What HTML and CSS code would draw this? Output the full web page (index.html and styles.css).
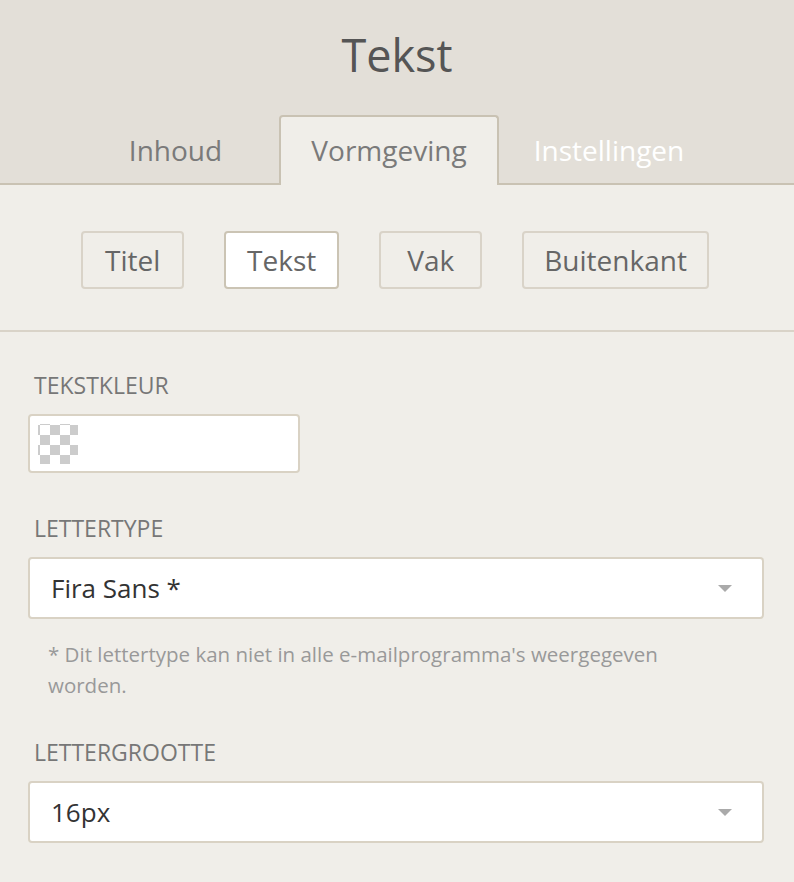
FILE: index.html
```html
<!DOCTYPE html>
<html lang="nl">
<head>
<meta charset="utf-8">
<title>Tekst</title>
<link rel="stylesheet" href="styles.css">
</head>
<body>
<div class="panel">
  <header class="header">
    <h1 class="title">Tekst</h1>
    <nav class="tabs">
      <div class="tab tab-first">Inhoud</div>
      <div class="tab tab-active">Vormgeving</div>
      <div class="tab tab-light">Instellingen</div>
    </nav>
  </header>
  <div class="subnav">
    <button class="pill">Titel</button>
    <button class="pill pill-active">Tekst</button>
    <button class="pill">Vak</button>
    <button class="pill">Buitenkant</button>
  </div>
  <div class="content">
    <div class="field">
      <div class="label">Tekstkleur</div>
      <div class="color-input"><span class="swatch"></span></div>
    </div>
    <div class="field field-note">
      <div class="label">Lettertype</div>
      <div class="select"><span class="select-value">Fira Sans *</span><span class="caret"></span></div>
      <p class="note">* Dit lettertype kan niet in alle e-mailprogramma's weergegeven worden.</p>
    </div>
    <div class="field">
      <div class="label">Lettergrootte</div>
      <div class="select"><span class="select-value">16px</span><span class="caret"></span></div>
    </div>
  </div>
</div>
</body>
</html>
```

FILE: styles.css
```css
* { box-sizing: border-box; }
html, body { margin: 0; padding: 0; }
body {
  background: #f0eee9;
  font-family: "Open Sans", "Liberation Sans", sans-serif;
  width: 794px;
  height: 882px;
  overflow: hidden;
}
.header {
  background: #e3dfd8;
  height: 185px;
  display: flex;
  flex-direction: column;
}
.title {
  margin: 0;
  height: 115px;
  padding-top: 24px;
  text-align: center;
  font-size: 45px;
  font-weight: 400;
  line-height: 62px;
  color: #555555;
}
.tabs {
  display: flex;
  justify-content: center;
  padding-right: 16px;
  height: 70px;
  border-bottom: 2px solid #c9c2b3;
}
.tab {
  width: 220px;
  height: 68px;
  text-align: center;
  font-size: 28px;
  line-height: 70px;
  color: #7a7a7a;
}
.tab-first { padding-left: 13px; }
.tab-active {
  background: #f0eee9;
  border: 2px solid #c9c2b3;
  border-bottom: none;
  border-radius: 4px 4px 0 0;
  height: 70px;
  margin-bottom: -2px;
  line-height: 66px;
}
.tab-light { color: #ffffff; }
.subnav {
  display: flex;
  justify-content: center;
  gap: 40px;
  padding: 46px 4px 41px 0;
  border-bottom: 2px solid #d9d3c8;
}
.pill {
  height: 58px;
  min-width: 103px;
  padding: 0 20px;
  background: transparent;
  border: 2px solid #d9d3c8;
  border-radius: 4px;
  font-family: inherit;
  font-size: 28px;
  color: #666666;
  line-height: 54px;
}
.pill-active {
  background: #ffffff;
  border-color: #cbc4b4;
  padding: 0 21px;
}
.content {
  padding: 37px 30px 0 28px;
}
.field { margin-bottom: 39px; }
.field-note { margin-bottom: 35px; }
.label {
  text-transform: uppercase;
  font-size: 23px;
  line-height: 32px;
  color: #777777;
  padding-left: 6px;
  margin-bottom: 13px;
}
.color-input {
  width: 272px;
  height: 59px;
  background: #ffffff;
  border: 2px solid #d9d2c4;
  border-radius: 4px;
  padding: 8px;
}
.swatch {
  display: block;
  width: 40px;
  height: 40px;
  background-color: #cccccc;
  background-image: conic-gradient(#cccccc 0 25%, #ffffff 0 50%, #cccccc 0 75%, #ffffff 0);
  background-size: 20px 20px;
  background-position: 2px 1px;
}
.select {
  width: 736px;
  height: 62px;
  background: #ffffff;
  border: 2px solid #d9d2c4;
  border-radius: 4px;
  display: flex;
  align-items: center;
  justify-content: space-between;
  padding: 0 30px 0 21px;
}
.select-value {
  font-size: 26px;
  color: #333333;
}
.caret {
  width: 0;
  height: 0;
  border-left: 7px solid transparent;
  border-right: 7px solid transparent;
  border-top: 7px solid #aaaaaa;
}
.note {
  margin: 20px 0 0;
  padding-left: 20px;
  font-size: 20.5px;
  line-height: 31px;
  color: #999999;
  max-width: 680px;
}
```
